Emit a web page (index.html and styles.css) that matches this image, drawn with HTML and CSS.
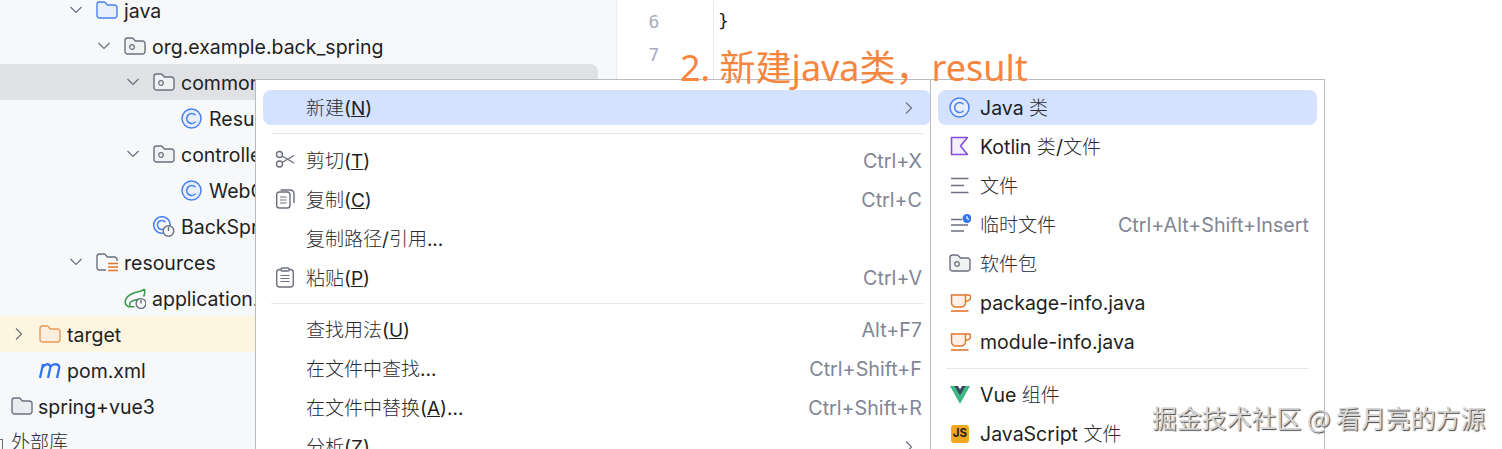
FILE: index.html
```html
<!DOCTYPE html>
<html lang="zh">
<head>
<meta charset="utf-8">
<title>新建 Java 类</title>
<link rel="stylesheet" href="styles.css">
</head>
<body>
<svg class="defs" width="0" height="0" aria-hidden="true">
  <symbol id="chev-d" viewBox="0 0 14 14"><path d="M1.500 4l5.500 5.500L12.500 4" fill="none" stroke="#6c707e" stroke-width="1.200"/></symbol>
  <symbol id="chev-r" viewBox="0 0 14 14"><path d="M4 1.500L9.500 7 4 12.500" fill="none" stroke="#6c707e" stroke-width="1.200"/></symbol>
  <symbol id="folder-blue" viewBox="0 0 22 21"><path d="M1 4.500A2.500 2.500 0 0 1 3.500 2h4.200c.6 0 1.100.2 1.500.6L11.400 5h7.100A2.500 2.500 0 0 1 21 7.500v8a2.500 2.500 0 0 1-2.500 2.500h-15A2.500 2.500 0 0 1 1 15.500z" fill="#e7effd" stroke="#4a81ee" stroke-width="1.400"/></symbol>
  <symbol id="folder-orange" viewBox="0 0 22 21"><path d="M1 4.500A2.500 2.500 0 0 1 3.500 2h4.200c.6 0 1.100.2 1.500.6L11.400 5h7.100A2.500 2.500 0 0 1 21 7.500v8a2.500 2.500 0 0 1-2.500 2.500h-15A2.500 2.500 0 0 1 1 15.500z" fill="#fdeedd" stroke="#e69a57" stroke-width="1.400"/></symbol>
  <symbol id="folder-grey" viewBox="0 0 22 21"><path d="M1 4.500A2.500 2.500 0 0 1 3.500 2h4.200c.6 0 1.100.2 1.500.6L11.400 5h7.100A2.500 2.500 0 0 1 21 7.500v8a2.500 2.500 0 0 1-2.500 2.500h-15A2.500 2.500 0 0 1 1 15.500z" fill="#ebecf0" stroke="#6c707e" stroke-width="1.400"/></symbol>
  <symbol id="pkg" viewBox="0 0 22 21"><path d="M1 4.500A2.500 2.500 0 0 1 3.500 2h4.200c.6 0 1.100.2 1.500.6L11.400 5h7.100A2.500 2.500 0 0 1 21 7.500v8a2.500 2.500 0 0 1-2.500 2.500h-15A2.500 2.500 0 0 1 1 15.500z" fill="#f1f2f4" stroke="#6c707e" stroke-width="1.400"/><circle cx="8" cy="11" r="2.300" fill="none" stroke="#6c707e" stroke-width="1.200"/></symbol>
  <symbol id="res" viewBox="0 0 22 21"><path d="M10 18H3.500A2.500 2.500 0 0 1 1 15.500v-11A2.500 2.500 0 0 1 3.500 2h4.200c.6 0 1.100.2 1.500.6L11.400 5h7.100A2.500 2.500 0 0 1 21 7.500V9" fill="#f7f8fa" stroke="#6c707e" stroke-width="1.400"/><path d="M12 11.500h10M12 15h10M12 18.500h10" stroke="#e2752c" stroke-width="1.500"/></symbol>
  <symbol id="cls" viewBox="0 0 22 21"><circle cx="10.500" cy="10.500" r="9.500" fill="#e7effd" stroke="#4a81ee" stroke-width="1.500"/><path d="M14.600 7.400a5 5 0 1 0 0 6.200" fill="none" stroke="#4a81ee" stroke-width="1.500"/></symbol>
  <symbol id="boot" viewBox="0 0 22 21"><circle cx="9" cy="9" r="8.300" fill="none" stroke="#4a81ee" stroke-width="1.500"/><path d="M12.500 6.300a4.500 4.500 0 1 0 0 5.400" fill="none" stroke="#4a81ee" stroke-width="1.500"/><circle cx="15.500" cy="15" r="5.300" fill="#f7f8fa" stroke="#6c707e" stroke-width="1.400"/><path d="M15.500 11v4" stroke="#6c707e" stroke-width="1.400"/></symbol>
  <symbol id="spring" viewBox="0 0 22 21"><path d="M20.500 1c.5 3 .3 5.500-1 7.500M20.500 1c-2 2.500-6 2.300-10 3.700C5.500 6.500 1.500 10 1.200 13.500c-.2 2.300 1.300 4.300 3.300 5.300h6M6 18c-1-2 0-3.800 2-4.800 2.500-1.200 5-1.200 7.500-2.500" fill="none" stroke="#3a9a4a" stroke-width="1.500"/><circle cx="17" cy="15.500" r="4.900" fill="#f7f8fa" stroke="#6c707e" stroke-width="1.400"/><path d="M17 11.800v3.800" stroke="#6c707e" stroke-width="1.400"/></symbol>
  <symbol id="maven" viewBox="0 0 22 21"><path d="M1 18L4 4M3.500 7.500C5.500 4 9.500 3.500 10.800 5.300c.7 1 .5 2.400.2 3.700L9 18M11 7.500C13 4 17.500 3.500 19.500 5.300c1 1 .8 2.400.5 3.700l-2 9" fill="none" stroke="#3574f0" stroke-width="2.300"/></symbol>
  <symbol id="scissors" viewBox="0 0 22 21"><circle cx="5.500" cy="4.500" r="3" fill="none" stroke="#6c707e" stroke-width="1.400"/><circle cx="5.500" cy="14" r="3" fill="none" stroke="#6c707e" stroke-width="1.400"/><path d="M8 6l12 7M8 12.500L20 5.500" fill="none" stroke="#6c707e" stroke-width="1.400"/></symbol>
  <symbol id="copy" viewBox="0 0 22 21"><rect x="2.700" y="3" width="13.300" height="16" rx="2.800" fill="none" stroke="#6c707e" stroke-width="1.400"/><path d="M6.500 1h10a3.500 3.500 0 0 1 3.500 3.500V14" fill="none" stroke="#6c707e" stroke-width="1.400"/><path d="M6 8h6.500M6 11h6.500M6 14h6.500" stroke="#6c707e" stroke-width="1.200"/></symbol>
  <symbol id="paste" viewBox="0 0 22 21"><rect x="2.700" y="2.500" width="16.600" height="17.500" rx="3" fill="none" stroke="#6c707e" stroke-width="1.400"/><rect x="7" y="1" width="8" height="3" rx="1" fill="#fff" stroke="#6c707e" stroke-width="1.400"/><path d="M6.500 8.500h9M6.500 11.500h9M6.500 14.500h9" stroke="#6c707e" stroke-width="1.200"/></symbol>
  <symbol id="kotlin" viewBox="0 0 22 21"><path d="M2.500 1.500h16L11.500 10l7 8.500h-16z" fill="#f3effd" stroke="#834dd9" stroke-width="1.600" stroke-linejoin="round"/></symbol>
  <symbol id="lines" viewBox="0 0 22 21"><path d="M2 3.500h17.500M2 10.500h13M2 17.500h17.500" stroke="#6c707e" stroke-width="1.400"/></symbol>
  <symbol id="scratch" viewBox="0 0 22 21"><path d="M2 5.500h11M2 11h17M2 17h13" stroke="#6c707e" stroke-width="1.400"/><circle cx="18" cy="4.500" r="4.500" fill="#3574f0"/><path d="M18 2v2.500l2 1" fill="none" stroke="#fff" stroke-width="1.100"/></symbol>
  <symbol id="cup" viewBox="0 0 22 21"><path d="M2.500 3h14v7.500a4.500 4.500 0 0 1-4.500 4.500H7a4.500 4.500 0 0 1-4.500-4.500z" fill="#fdf0e6" stroke="#e2752c" stroke-width="1.500"/><path d="M16.500 3h3a2 2 0 0 1 2 2 4 4 0 0 1-5 4" fill="none" stroke="#e2752c" stroke-width="1.500"/><path d="M2 19h17.500" stroke="#e2752c" stroke-width="1.600"/></symbol>
  <symbol id="vue" viewBox="0 0 22 21"><path d="M1 1h5l5 8.500L16 1h5L11 19z" fill="#41b883"/><path d="M5.500 1H9l2 3.500L13 1h3.500L11 10.500z" fill="#35495e"/></symbol>
</svg>

<div class="ide">
  <section class="tree">
    <div class="row l2"><svg class="chev"><use href="#chev-d"/></svg><svg class="ico"><use href="#folder-blue"/></svg><span class="name">java</span></div>
    <div class="row l3"><svg class="chev"><use href="#chev-d"/></svg><svg class="ico"><use href="#pkg"/></svg><span class="name">org.example.back_spring</span></div>
    <div class="row l4 selected"><svg class="chev"><use href="#chev-d"/></svg><svg class="ico"><use href="#pkg"/></svg><span class="name">common</span></div>
    <div class="row l5"><svg class="ico"><use href="#cls"/></svg><span class="name">Result</span></div>
    <div class="row l4"><svg class="chev"><use href="#chev-d"/></svg><svg class="ico"><use href="#pkg"/></svg><span class="name">controller</span></div>
    <div class="row l5"><svg class="ico"><use href="#cls"/></svg><span class="name">WebController</span></div>
    <div class="row l4"><span class="chev-gap"></span><svg class="ico"><use href="#boot"/></svg><span class="name">BackSpringApplication</span></div>
    <div class="row l2"><svg class="chev"><use href="#chev-d"/></svg><svg class="ico"><use href="#res"/></svg><span class="name">resources</span></div>
    <div class="row l3"><span class="chev-gap"></span><svg class="ico"><use href="#spring"/></svg><span class="name">application.properties</span></div>
    <div class="row l0 ignored"><svg class="chev"><use href="#chev-r"/></svg><svg class="ico"><use href="#folder-orange"/></svg><span class="name">target</span></div>
    <div class="row l0"><span class="chev-gap"></span><svg class="ico"><use href="#maven"/></svg><span class="name">pom.xml</span></div>
    <div class="row lroot"><svg class="ico ico-root"><use href="#folder-grey"/></svg><span class="name">spring+vue3</span></div>
    <div class="row lib"><span class="lib-edge"></span><span class="name zh">外部库</span></div>
  </section>
  <div class="gutter"><span>6</span><span>7</span></div>
  <div class="code"><span>}</span></div>
</div>

<nav class="menu menu-main">
  <div class="item active"><span class="slot"></span><span class="label"><span class="zh">新建</span>(<u>N</u>)</span><svg class="arrow"><use href="#chev-r"/></svg></div>
  <hr class="sep">
  <div class="item"><svg class="slot"><use href="#scissors"/></svg><span class="label"><span class="zh">剪切</span>(<u>T</u>)</span><span class="keys">Ctrl+X</span></div>
  <div class="item"><svg class="slot"><use href="#copy"/></svg><span class="label"><span class="zh">复制</span>(<u>C</u>)</span><span class="keys">Ctrl+C</span></div>
  <div class="item"><span class="slot"></span><span class="label"><span class="zh">复制路径</span>/<span class="zh">引用</span>...</span></div>
  <div class="item"><svg class="slot"><use href="#paste"/></svg><span class="label"><span class="zh">粘贴</span>(<u>P</u>)</span><span class="keys">Ctrl+V</span></div>
  <hr class="sep">
  <div class="item"><span class="slot"></span><span class="label"><span class="zh">查找用法</span>(<u>U</u>)</span><span class="keys">Alt+F7</span></div>
  <div class="item"><span class="slot"></span><span class="label"><span class="zh">在文件中查找</span>...</span><span class="keys">Ctrl+Shift+F</span></div>
  <div class="item"><span class="slot"></span><span class="label"><span class="zh">在文件中替换</span>(<u>A</u>)...</span><span class="keys">Ctrl+Shift+R</span></div>
  <div class="item"><span class="slot"></span><span class="label"><span class="zh">分析</span>(<u>Z</u>)</span><svg class="arrow"><use href="#chev-r"/></svg></div>
</nav>

<nav class="menu menu-sub">
  <div class="item active"><svg class="slot"><use href="#cls"/></svg><span class="label">Java <span class="zh">类</span></span></div>
  <div class="item"><svg class="slot"><use href="#kotlin"/></svg><span class="label">Kotlin <span class="zh">类</span>/<span class="zh">文件</span></span></div>
  <div class="item"><svg class="slot"><use href="#lines"/></svg><span class="label"><span class="zh">文件</span></span></div>
  <div class="item"><svg class="slot"><use href="#scratch"/></svg><span class="label"><span class="zh">临时文件</span></span><span class="keys">Ctrl+Alt+Shift+Insert</span></div>
  <div class="item"><svg class="slot"><use href="#pkg"/></svg><span class="label"><span class="zh">软件包</span></span></div>
  <div class="item"><svg class="slot"><use href="#cup"/></svg><span class="label">package-info.java</span></div>
  <div class="item"><svg class="slot"><use href="#cup"/></svg><span class="label">module-info.java</span></div>
  <hr class="sep">
  <div class="item"><svg class="slot"><use href="#vue"/></svg><span class="label">Vue <span class="zh">组件</span></span></div>
  <div class="item"><span class="slot js">JS</span><span class="label">JavaScript <span class="zh">文件</span></span></div>
</nav>

<div class="note">2. 新建java类，result</div>
<div class="mark">掘金技术社区 @ 看月亮的方源</div>
</body>
</html>
```
FILE: styles.css
```css
* { box-sizing: border-box; }
html, body { height: 100%; }
body {
  margin: 0;
  position: relative;
  overflow: hidden;
  background: #fff;
  color: #1e1f22;
  font: 19.5px/26px Inter, "Noto Sans CJK SC", sans-serif;
}
.defs { position: absolute; }
.ide { display: grid; grid-template-columns: 617px 97px 1fr; height: 449px; overflow: hidden; }
.zh { font-weight: 300; font-size: 19px; color: #2b2c30; }

/* project tree */
.tree { background: #f7f8fa; border-right: 1px solid #ebecf0; padding: 0 18px 0 0; overflow: hidden; }
.row { display: flex; align-items: center; height: 36px; white-space: nowrap; overflow: hidden; }
.row:first-child { margin-top: -8px; }
.name { padding-top: 2px; }
.l0 { padding-left: 11px; }
.l2 { padding-left: 68px; }
.l3 { padding-left: 96px; }
.l4 { padding-left: 125px; }
.l5 { padding-left: 181px; }
.lroot { padding-left: 11px; }
.lib { padding-left: 0; }
.lib-edge { width: 3px; height: 12px; margin: 6px 8px 0 0; border: 1.400px solid #6c707e; border-left: 0; flex: none; }
.selected { background: #dfe1e5; border-radius: 0 8px 8px 0; }
.ignored { background: #fef5e0; border-radius: 0 8px 8px 0; }
.chev { width: 14px; height: 14px; margin: 0 13px 0 1px; flex: none; }
.chev-gap { width: 28px; flex: none; }
.ico { width: 22px; height: 21px; margin-right: 6px; flex: none; }
.ico-root { margin-right: 5px; }

.gutter { display: flex; flex-direction: column; align-items: center; padding: 5px 22px 0 0; border-right: 1px solid #ebecf0; color: #a8adbd; font: 18px/33px "DejaVu Sans Mono", monospace; }
.code { padding: 4px 0 0 4px; font: 18px/33px "DejaVu Sans Mono", monospace; }

/* menus */
.menu { position: absolute; top: 79px; height: 380px; background: #fff; border: 1px solid #b9bbc0; padding: 10px 7px 0; }
.menu-main { left: 255px; width: 684px; }
.menu-sub { left: 930px; width: 395px; }
.item { display: flex; align-items: center; height: 35px; margin-bottom: 4px; padding: 0 8px 0 11px; white-space: nowrap; border-radius: 8px; }
.menu-main .item { padding-right: 9px; }
.item.active { background: #d4e2ff; }
.slot { width: 22px; height: 21px; margin-right: 9px; flex: none; }
.menu-main .slot { margin-right: 10px; }
.label { flex: 1; padding-top: 1.500px; }
.menu-main .label { font-size: 19px; padding-top: 3px; }
.keys { color: #818594; padding-top: 1px; font-size: 19.700px; }
.arrow { width: 14px; height: 14px; margin-right: 6px; flex: none; }
.sep { height: 1px; margin: 8px 8px 8.500px; border: 0; background: #e7e8eb; }
.menu-sub .sep { margin: 9px 8px 8.500px; }
.js { display: flex; align-items: center; justify-content: center; width: 18px; height: 18px; margin: 0 11px 0 2px; border-radius: 3px; background: #f2a81e; color: #1e1f22; font-size: 11.500px; font-weight: 700; line-height: 1; }

/* annotations over the screenshot */
.note { position: absolute; left: 680px; top: 44px; color: #f5853f; font: 36px/48px "Noto Sans", "Noto Sans CJK SC", sans-serif; white-space: nowrap; }
.mark { position: absolute; left: 1152px; top: 401px; color: #d6d6d6; font: 24.900px/32px "Noto Sans CJK SC", sans-serif; white-space: nowrap; text-shadow: 1px 1px 1px #444; }
```
